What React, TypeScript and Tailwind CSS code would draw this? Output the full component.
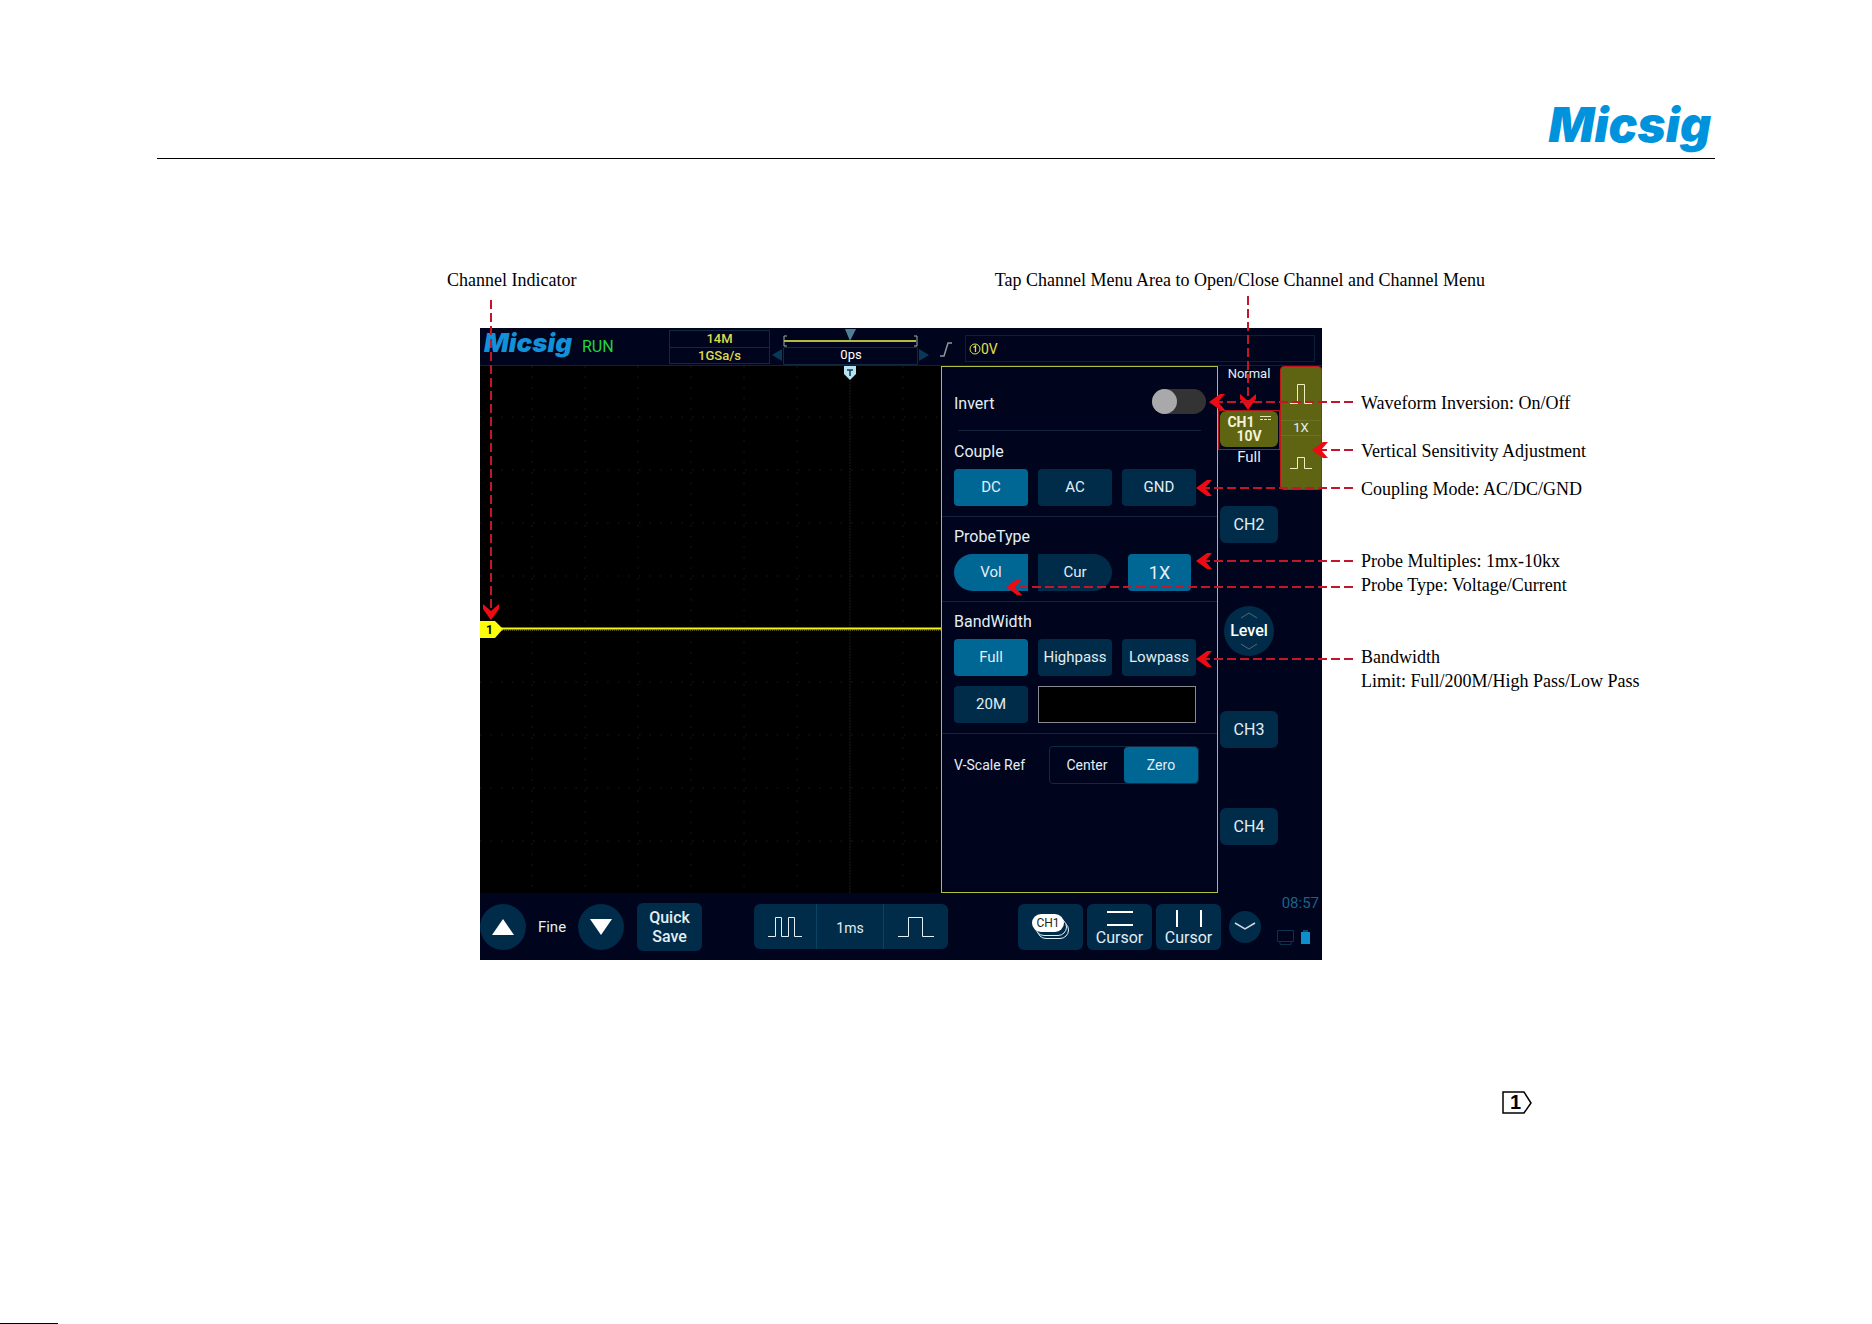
import React, { useState } from "react";
import clsx from "clsx";

const DIV = 53;

const callouts = [
  { text: "Waveform Inversion: On/Off", gap: "" },
  { text: "Vertical Sensitivity Adjustment", gap: "mt-6" },
  { text: "Coupling Mode: AC/DC/GND", gap: "mt-3.5" },
  { text: "Probe Multiples: 1mx-10kx", gap: "mt-12" },
  { text: "Probe Type: Voltage/Current", gap: "" },
  { text: "Bandwidth", gap: "mt-12" },
  { text: "Limit: Full/200M/High Pass/Low Pass", gap: "" },
];

// Pointers that run from the callouts on the right into the screen
const pointers = [
  { place: "top-[65px] w-[144px]", key: "invert" },
  { place: "top-[113px] w-[41px]", key: "sensitivity" },
  { place: "top-[151px] w-[157px]", key: "couple" },
  { place: "top-[224px] w-[157px]", key: "multiples" },
  { place: "top-[250px] w-[347px]", key: "probe" },
  { place: "top-[322px] w-[157px]", key: "bandwidth" },
];

function LeftArrow({ place }: { place: string }) {
  return (
    <svg
      aria-hidden="true"
      className={clsx("absolute -right-[31px] h-[18px] pointer-events-none", place)}
    >
      <line x1="100%" x2="8" y1="9" y2="9" stroke="#c4162a" strokeWidth="2" strokeDasharray="9 4" />
      <path d="M0 9 L11 1 L16 1 L9 9 L16 17 L11 17 Z" fill="#ee0a12" />
    </svg>
  );
}

function DownArrow({ place, length }: { place: string; length: number }) {
  return (
    <svg
      aria-hidden="true"
      width="18"
      height={length}
      className={clsx("absolute pointer-events-none", place)}
    >
      <line x1="9" x2="9" y1="0" y2={length - 8} stroke="#c4162a" strokeWidth="2" strokeDasharray="9 4" />
      <path
        d={`M9 ${length} L1 ${length - 11} L1 ${length - 16} L9 ${length - 9} L17 ${length - 16} L17 ${length - 11} Z`}
        fill="#ee0a12"
      />
    </svg>
  );
}

function PanelButton({
  children,
  active,
  className = "w-[74px] rounded",
  onClick,
}: {
  children: React.ReactNode;
  active?: boolean;
  className?: string;
  onClick?: () => void;
}) {
  return (
    <button
      onClick={onClick}
      className={clsx(
        "h-[37px] shrink-0 text-[#e3eef5]",
        active ? "bg-[#006694]" : "bg-[#002c49]",
        className,
      )}
    >
      {children}
    </button>
  );
}

function TopBar() {
  return (
    <div className="flex h-[38px] border-b border-[#0c2236] pl-1">
      <span className="w-[98px] font-[Inter] text-[26px] leading-[30px] font-black italic text-[#1290d8]">
        Micsig
      </span>
      <span className="w-[87px] text-base leading-[38px] text-[#22d63a]">RUN</span>
      <div className="mt-0.5 h-[34px] w-[101px] border border-[#0f2a42] text-center text-[13px] leading-4 font-medium text-[#dfdc4c]">
        <div className="border-b border-[#0f2a42]">14M</div>
        <div>1GSa/s</div>
      </div>
      <div className="relative flex w-[162px] flex-col items-center">
        <svg width="162" height="38" className="absolute inset-0" aria-hidden="true">
          <path d="M75 1 H86 L80 13 Z" fill="#4f7f98" />
          <path d="M14 13 H146" stroke="#b9b83e" strokeWidth="2" />
          <path d="M17 8 H14 V18 H17 M144 8 H147 V18 H144" fill="none" stroke="#9fb0a8" />
          <path d="M13.5 19.5 H147.5 V36.5 H13.5 Z" fill="none" stroke="#0f2a42" />
          <path d="M12 21 V33 L2 27 Z M149 21 V33 L159 27 Z" fill="#063a57" />
        </svg>
        <span className="mt-[19px] text-[13px] leading-4 text-white">0ps</span>
      </div>
      <svg width="33" height="38" aria-hidden="true">
        <path d="M8 28 H12 L16 15 H20" fill="none" stroke="#8e979c" strokeWidth="1.5" />
      </svg>
      <div className="mt-[7px] mr-[7px] flex h-[27px] flex-1 items-center border border-[#0a2036] pl-[3px] text-sm text-[#e2e04a]">
        <svg width="12" height="12" viewBox="0 0 12 12" aria-hidden="true">
          <circle cx="6" cy="6" r="5" fill="none" stroke="#e2e04a" />
          <path d="M4.5 4.5 L6.5 3 V9" fill="none" stroke="#e2e04a" strokeWidth="1.3" />
        </svg>
        <span>0V</span>
      </div>
    </div>
  );
}

function Graticule() {
  return (
    <div className="relative min-w-0 flex-1 bg-black">
      <svg className="absolute inset-0 h-full w-full" aria-hidden="true">
        {[1, 2, 3, 4, 5, 6, 8].map((n) => (
          <line key={n} x1={n * DIV - 1} x2={n * DIV - 1} y1="0" y2="100%" stroke="#1c1c1c" strokeDasharray="1.5 9.1" />
        ))}
        {[-4, -3, -2, -1, 1, 2, 3, 4].map((n) => (
          <line key={n} x1="0" x2="100%" y1={263 + n * DIV} y2={263 + n * DIV} stroke="#1c1c1c" strokeDasharray="1.5 9.1" />
        ))}
        <line x1="370" x2="370" y1="0" y2="100%" stroke="#1d1d1d" strokeDasharray="2 1" />
        <line x1="20" x2="100%" y1="262.5" y2="262.5" stroke="#f4f414" strokeWidth="2" />
        <line x1="20" x2="100%" y1="264" y2="264" stroke="#a8a81a" strokeDasharray="1 1" />
        <path d="M0 255 H15 L23 263 L15 272 H0 Z" fill="#fdfd0a" />
        <path d="M364 0 H376 V8 L370 14 L364 8 Z" fill="#b5e3f2" />
        <path d="M367 4 H373 M370 4 V10" stroke="#16394c" strokeWidth="1.5" />
      </svg>
      <span className="absolute top-[255px] left-1.5 text-xs leading-[18px] font-bold text-black">1</span>
    </div>
  );
}

function ChannelMenu() {
  const [invert, setInvert] = useState(false);
  const [couple, setCouple] = useState("DC");
  const [probe, setProbe] = useState("Vol");
  const [band, setBand] = useState("Full");
  const [scaleRef, setScaleRef] = useState("Zero");

  return (
    <div className="w-[277px] shrink-0 border border-[#b2c03c] text-[15px] text-[#e3eef5]">
      <div className="mr-[11px] ml-3 flex items-end justify-between pt-[22px]">
        <label htmlFor="invert" className="text-base leading-5">
          Invert
        </label>
        <label className="relative h-[25px] w-[54px] rounded-full bg-[#333333]">
          <input
            id="invert"
            type="checkbox"
            checked={invert}
            onChange={(e) => setInvert(e.target.checked)}
            className="peer sr-only"
          />
          <span className="absolute top-0 left-0 size-[25px] rounded-full bg-[#a9a9ab] peer-checked:left-[29px]" />
        </label>
      </div>
      <hr className="mx-4 mt-4 border-[#13243a]" />

      <section className="border-b border-[#13243a] px-3 pt-[9px] pb-[10px]">
        <h2 className="mb-[5px] text-base leading-6">Couple</h2>
        <div className="flex gap-[10px]">
          {["DC", "AC", "GND"].map((name) => (
            <PanelButton key={name} active={couple === name} onClick={() => setCouple(name)}>
              {name}
            </PanelButton>
          ))}
        </div>
      </section>

      <section className="border-b border-[#13243a] px-3 pt-2 pb-[10px]">
        <h2 className="mb-[5px] text-base leading-6">ProbeType</h2>
        <div className="flex gap-[10px]">
          <PanelButton
            active={probe === "Vol"}
            onClick={() => setProbe("Vol")}
            className="w-[74px] rounded-l-full"
          >
            Vol
          </PanelButton>
          <PanelButton
            active={probe === "Cur"}
            onClick={() => setProbe("Cur")}
            className="w-[74px] rounded-r-full"
          >
            Cur
          </PanelButton>
          <PanelButton active className="ml-1.5 w-[63px] rounded text-lg">
            1X
          </PanelButton>
        </div>
      </section>

      <section className="border-b border-[#13243a] px-3 pt-2 pb-[10px]">
        <h2 className="mb-[5px] text-base leading-6">BandWidth</h2>
        <div className="flex flex-wrap gap-[10px]">
          {["Full", "Highpass", "Lowpass", "20M"].map((name) => (
            <PanelButton key={name} active={band === name} onClick={() => setBand(name)}>
              {name}
            </PanelButton>
          ))}
          <input
            type="text"
            aria-label="Cutoff frequency"
            className="h-[37px] w-[158px] border border-[#8a8a90] bg-black px-2 text-white"
          />
        </div>
      </section>

      <div className="flex items-center justify-between pt-3 pr-[18px] pl-3 text-sm">
        <span>V-Scale Ref</span>
        <div className="flex rounded border border-[#0d2b44]">
          {["Center", "Zero"].map((name) => (
            <button
              key={name}
              onClick={() => setScaleRef(name)}
              className={clsx("h-9 w-[74px] rounded", scaleRef === name && "bg-[#006694]")}
            >
              {name}
            </button>
          ))}
        </div>
      </div>
    </div>
  );
}

function ChannelButton({ name, className }: { name: string; className: string }) {
  return (
    <button
      className={clsx("h-[37px] w-[58px] rounded-md bg-[#002c49] text-base text-[#e3eef5]", className)}
    >
      {name}
    </button>
  );
}

function ChannelColumn() {
  return (
    <div className="flex w-[104px] shrink-0 items-start text-[#e3eef5]">
      <div className="flex w-[62px] flex-col items-center">
        <span className="text-[13px] leading-4">Normal</span>
        <div className="mt-7 h-10 w-full border border-[#b3121c] px-px">
          <button className="h-9 w-full rounded-md bg-[#5f6412] text-sm leading-[14px] font-bold text-[#f2f3d8]">
            <span className="flex items-start justify-center gap-[5px]">
              CH1
              <svg width="11" height="6" aria-hidden="true">
                <path d="M0 1.5 H11" stroke="#e6e8c0" />
                <path d="M0 4.5 H11" stroke="#e6e8c0" strokeDasharray="3 1" />
              </svg>
            </span>
            10V
          </button>
        </div>
        <span className="text-[15px] leading-[14px]">Full</span>
        <ChannelButton name="CH2" className="mt-[42px]" />
        <button className="mt-[63px] flex size-[50px] flex-col items-center justify-between rounded-full bg-[#002c49] py-1.5 text-base leading-5 font-medium text-white">
          <svg width="18" height="7" aria-hidden="true">
            <path d="M1 6 L9 1 L17 6" fill="none" stroke="#4d6a7a" />
          </svg>
          Level
          <svg width="18" height="7" aria-hidden="true">
            <path d="M1 1 L9 6 L17 1" fill="none" stroke="#4d6a7a" />
          </svg>
        </button>
        <ChannelButton name="CH3" className="mt-[55px]" />
        <ChannelButton name="CH4" className="mt-[60px]" />
      </div>
      <div className="flex h-[124px] w-[42px] flex-col rounded-sm border border-[#c4161c] bg-[#5f6412] text-[13px]">
        <button aria-label="Increase sensitivity" className="flex flex-1 items-center justify-center">
          <svg width="22" height="22" aria-hidden="true">
            <path d="M0 20.5 H7.5 V1.5 H14.5 V20.5 H22" fill="none" stroke="#eef0c4" />
          </svg>
        </button>
        <span className="border-y border-[#6c7128] text-center leading-[14px]">1X</span>
        <button aria-label="Decrease sensitivity" className="flex flex-1 items-center justify-center">
          <svg width="22" height="14" aria-hidden="true">
            <path d="M0 12.5 H7.5 V1.5 H14.5 V12.5 H22" fill="none" stroke="#eef0c4" />
          </svg>
        </button>
      </div>
    </div>
  );
}

function BottomBar() {
  return (
    <div className="flex h-[67px] items-center text-[#e3eef5]">
      <button aria-label="Up" className="flex size-[46px] items-center justify-center rounded-full bg-[#002c49]">
        <svg width="22" height="16" aria-hidden="true">
          <path d="M11 0 L22 16 H0 Z" fill="#fff" />
        </svg>
      </button>
      <span className="w-[52px] pt-0.5 text-center text-[15px]">Fine</span>
      <button aria-label="Down" className="flex size-[46px] items-center justify-center rounded-full bg-[#002c49]">
        <svg width="22" height="16" aria-hidden="true">
          <path d="M0 0 H22 L11 16 Z" fill="#fff" />
        </svg>
      </button>
      <button className="ml-[13px] h-12 w-[65px] rounded-md bg-[#002c49] text-base leading-[19px] font-medium">
        Quick Save
      </button>
      <div className="ml-[52px] flex h-[45px] w-[194px] divide-x divide-[#0a4261] rounded-md bg-[#002c49] text-sm">
        <button aria-label="Shorter time base" className="flex w-[63px] items-center justify-center">
          <svg width="34" height="22" aria-hidden="true">
            <path d="M0 20.5 H7.5 V1.5 H13.5 V20.5 H20.5 V1.5 H26.5 V20.5 H34" fill="none" stroke="#e3eef5" />
          </svg>
        </button>
        <button className="flex-1 pt-0.5">1ms</button>
        <button aria-label="Longer time base" className="flex w-16 items-center justify-center">
          <svg width="36" height="22" aria-hidden="true">
            <path d="M0 20.5 H10.5 V1.5 H24.5 V20.5 H36" fill="none" stroke="#e3eef5" />
          </svg>
        </button>
      </div>

      <div className="ml-auto flex h-full items-center gap-1 pr-[3px]">
        <button className="flex h-[46px] w-[65px] items-center justify-center rounded-md bg-[#002c49]">
          <span className="relative h-[25px] w-[37px]">
            <span className="absolute top-[7px] left-[5px] h-[18px] w-8 rounded-full border border-[#e3eef5] bg-[#002c49]" />
            <span className="absolute top-1 left-[3px] h-[18px] w-8 rounded-full border border-[#e3eef5] bg-[#002c49]" />
            <span className="absolute top-0 left-0 h-[18px] w-8 rounded-full bg-white text-center text-xs leading-[18px] text-[#222222]">
              CH1
            </span>
          </span>
        </button>
        <button className="flex h-[46px] w-[65px] flex-col items-center rounded-md bg-[#002c49] pt-1.5 text-base leading-5">
          <svg width="26" height="18" className="shrink-0" aria-hidden="true">
            <path d="M0 2 H26 M0 15 H26" stroke="#fff" strokeWidth="2" />
          </svg>
          Cursor
        </button>
        <button className="flex h-[46px] w-[65px] flex-col items-center rounded-md bg-[#002c49] pt-1.5 text-base leading-5">
          <svg width="26" height="18" className="shrink-0" aria-hidden="true">
            <path d="M1 0 V17 M25 0 V17" stroke="#fff" strokeWidth="2" />
          </svg>
          Cursor
        </button>
        <button aria-label="More" className="ml-1 flex size-8 items-center justify-center rounded-full bg-[#002c49]">
          <svg width="22" height="9" aria-hidden="true">
            <path d="M1 1 L11 7 L21 1" fill="none" stroke="#cddbe4" strokeWidth="1.5" />
          </svg>
        </button>
        <div className="ml-3 flex flex-col items-end gap-4 self-start text-[15px] leading-5 text-[#17638d]">
          08:57
          <svg width="42" height="17" aria-hidden="true">
            <path d="M.5 1.5 H16.5 V12.5 H.5 Z M3 15.5 H14 M3 12.5 V15.5 M14 12.5 V15.5" fill="none" stroke="#0b3350" />
            <path d="M24 3 H33 V15 H24 Z" fill="#0b90cc" />
            <path d="M26 1 H31 V3 H26 Z" fill="#0b4a6e" />
          </svg>
        </div>
      </div>
    </div>
  );
}

export default function App() {
  return (
    <div className="flex min-h-screen flex-col bg-white font-['Liberation_Serif',serif] text-black">
      <header className="mx-[157px] flex justify-end border-b border-black pt-[95px] pr-1 pb-[3px]">
        <span className="h-[60px] font-[Inter] text-5xl leading-[60px] font-black italic text-[#0093dd]">
          Micsig
        </span>
      </header>

      <main className="flex-1">
        <div className="mt-[109px] mr-[387px] ml-[447px] flex justify-between text-lg leading-6 whitespace-nowrap">
          <p>Channel Indicator</p>
          <p>Tap Channel Menu Area to Open/Close Channel and Channel Menu</p>
        </div>

        <div className="mt-9 mr-[232px] ml-[480px] flex items-start">
          <div className="relative min-w-0 flex-1 bg-[#00041c] font-[Roboto,sans-serif]">
            <TopBar />
            <div className="flex h-[527px]">
              <Graticule />
              <ChannelMenu />
              <ChannelColumn />
            </div>
            <BottomBar />

            <DownArrow place="left-0.5 -top-7" length={320} />
            <DownArrow place="right-[65px] -top-8" length={114} />
            {pointers.map(({ place, key }) => (
              <LeftArrow key={key} place={place} />
            ))}
          </div>
          <ul className="w-[318px] shrink-0 pt-[63px] pl-[39px] text-lg leading-6 whitespace-nowrap">
            {callouts.map(({ text, gap }) => (
              <li key={text} className={gap}>
                {text}
              </li>
            ))}
          </ul>
        </div>

        <div className="mt-[131px] mr-[340px] flex justify-end">
          <div className="relative h-[23px] w-[30px] pl-2 font-['Liberation_Sans',sans-serif] text-xl leading-[23px] font-bold">
            <svg width="30" height="23" className="absolute inset-0" aria-hidden="true">
              <path d="M1 1 H22 L29 12 L22 22 H1 Z" fill="none" stroke="#000" strokeWidth="1.5" />
            </svg>
            1
          </div>
        </div>
      </main>

      <footer className="flex h-px">
        <div className="w-[58px] bg-black" />
      </footer>
    </div>
  );
}
